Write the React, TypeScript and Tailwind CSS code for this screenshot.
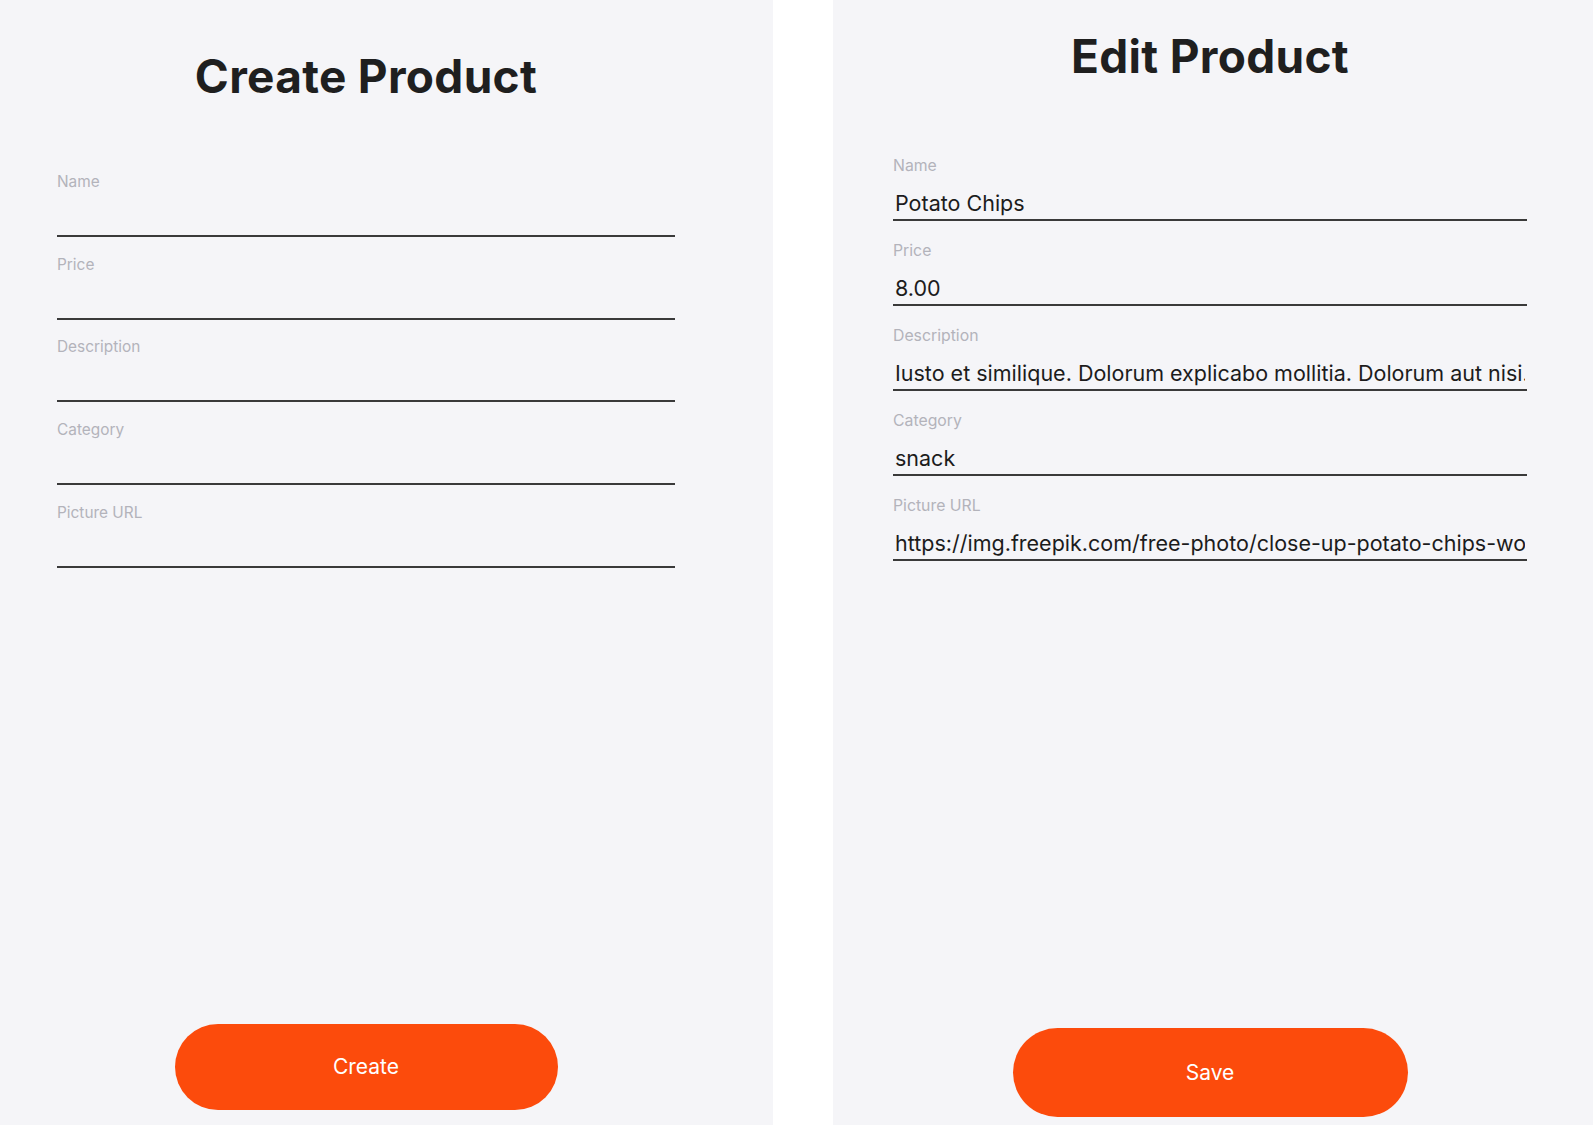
import React from "react";

type FieldProps = {
  label: string;
  value?: string;
  big?: boolean;
};

const font = { fontFamily: "Inter, 'Noto Sans', sans-serif" };

/* ── campo com rótulo e sublinhado ── */
function Field({ label, value = "", big = false }: FieldProps) {
  return (
    <label className={big ? "flex flex-col h-[85px]" : "flex flex-col h-[82.7px]"}>
      <span className={big ? "text-[15.8px] leading-[20px] text-[#b3b3bb]" : "text-[15.4px] leading-[20px] text-[#b3b3bb]"}>
        {label}
      </span>
      <input
        readOnly
        defaultValue={value}
        className={
          big
            ? "mt-[13px] w-full bg-transparent border-b-2 border-[#3a3a3a] px-[2px] pb-[2px] text-[21.5px] leading-[28px] text-[#1c1c1c] outline-none"
            : "mt-[16px] w-full bg-transparent border-b-2 border-[#3a3a3a] px-[2px] pb-[2px] text-[20px] leading-[25px] text-[#1c1c1c] outline-none"
        }
      />
    </label>
  );
}

export default function App() {
  return (
    <div style={font} className="flex w-[1593px] h-[1125px] bg-white overflow-hidden">
      {/* CREATE */}
      <section className="w-[773px] h-full bg-[#f5f5f8] flex flex-col pl-[57px]">
        <div className="w-[618px] flex flex-col h-full">
          <h1 className="mt-[50px] text-center text-[46px] leading-[52px] font-bold tracking-[0.3px] text-[#1f1f1f]">
            Create Product
          </h1>
          <div className="mt-[70px] flex flex-col">
            <Field label="Name" />
            <Field label="Price" />
            <Field label="Description" />
            <Field label="Category" />
            <Field label="Picture URL" />
          </div>
          <div className="mt-auto mb-[15px] flex justify-center">
            <button className="w-[383px] h-[86px] rounded-full bg-[#fc4b0c] text-white text-[21px]">
              Create
            </button>
          </div>
        </div>
      </section>

      {/* EDIT */}
      <section className="ml-[60px] w-[760px] h-full bg-[#f5f5f8] flex flex-col pl-[60px]">
        <div className="w-[634px] flex flex-col h-full">
          <h1 className="mt-[30px] text-center text-[46px] leading-[52px] font-bold tracking-[0.3px] text-[#1f1f1f]">
            Edit Product
          </h1>
          <div className="mt-[74px] flex flex-col">
            <Field big label="Name" value="Potato Chips" />
            <Field big label="Price" value="8.00" />
            <Field
              big
              label="Description"
              value="Iusto et similique. Dolorum explicabo mollitia. Dolorum aut nisi. Voluptatem quo et."
            />
            <Field big label="Category" value="snack" />
            <Field
              big
              label="Picture URL"
              value="https://img.freepik.com/free-photo/close-up-potato-chips-wooden-bowl_23-2148240497.jpg"
            />
          </div>
          <div className="mt-auto mb-[8px] flex justify-center">
            <button className="w-[395px] h-[89px] rounded-full bg-[#fc4b0c] text-white text-[21px]">
              Save
            </button>
          </div>
        </div>
      </section>
    </div>
  );
}
